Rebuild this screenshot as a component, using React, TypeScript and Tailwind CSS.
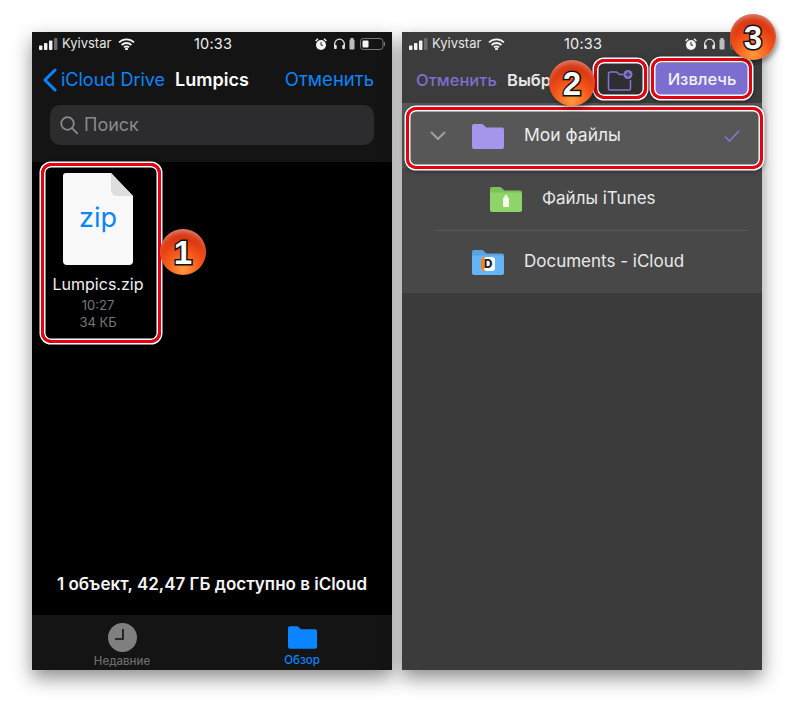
const phoneFont = { fontFamily: 'Inter, "Liberation Sans", sans-serif' };

function StatusBar() {
  return (
    <div className="flex h-[30px] items-center pb-[6px] pl-[7px] pr-[6px] text-[13px] text-[#e6e6e6]">
      <svg width="19" height="12" viewBox="0 0 19 12">
        <rect x="0" y="7.5" width="3.4" height="4.5" rx="0.8" fill="#f2f2f2" />
        <rect x="5" y="5" width="3.4" height="7" rx="0.8" fill="#f2f2f2" />
        <rect x="10" y="2.5" width="3.4" height="9.5" rx="0.8" fill="#f2f2f2" />
        <rect x="15" y="0" width="3.4" height="12" rx="0.8" fill="#6b6b6b" />
      </svg>
      <span className="ml-[4px] w-[50px]">Kyivstar</span>
      <svg className="ml-[6px]" width="17" height="12" viewBox="0 0 17 12" fill="none" stroke="#f2f2f2" strokeWidth="1.8">
        <path d="M1 4.4a10.6 10.6 0 0 1 15 0" />
        <path d="M3.6 7a7 7 0 0 1 9.8 0" />
        <path d="M6 9.4a3.5 3.5 0 0 1 5 0" />
        <circle cx="8.5" cy="11" r="0.6" fill="#f2f2f2" />
      </svg>
      <span className="ml-[59px] text-[14.5px] tracking-[0.2px] text-[#efefef]">10:33</span>
      <div className="ml-auto flex items-center">
        <svg width="12" height="13" viewBox="0 0 12 13">
          <circle cx="6" cy="7" r="5" fill="#f2f2f2" />
          <path d="M6 4v3.2h2" stroke="#333" strokeWidth="1" fill="none" />
          <path d="M0.6 3 3 0.8M11.4 3 9 0.8" stroke="#f2f2f2" strokeWidth="1.5" />
        </svg>
        <svg className="ml-[6px]" width="13" height="12" viewBox="0 0 12 12" fill="none">
          <path d="M1.2 8V6a4.8 4.8 0 0 1 9.6 0v2" stroke="#e8e8e8" strokeWidth="1.3" />
          <rect x="0.6" y="7" width="2.6" height="4" rx="0.8" fill="#e8e8e8" />
          <rect x="8.8" y="7" width="2.6" height="4" rx="0.8" fill="#e8e8e8" />
        </svg>
        <svg className="ml-[3px]" width="6" height="12" viewBox="0 0 6 12">
          <rect x="1.5" y="0" width="3" height="2" fill="#bbb" />
          <rect x="0.5" y="1.5" width="5" height="10" rx="1" fill="#bdbdbd" />
        </svg>
        <svg className="ml-[5px]" width="26" height="12" viewBox="0 0 26 12" fill="none">
          <rect x="0.5" y="0.5" width="22.5" height="11" rx="3" stroke="#777" />
          <rect x="2.5" y="2.5" width="6" height="7" rx="1" fill="#f5f5f5" />
          <path d="M24.4 4v4" stroke="#777" strokeWidth="1.2" />
        </svg>
      </div>
    </div>
  );
}

function Folder({ color, tab, className }: { color: string; tab: string; className?: string }) {
  return (
    <svg className={className} width="32" height="26" viewBox="0 0 32 26">
      <path d="M0 3a2 2 0 0 1 2-2h8.5l4 3.5H30a2 2 0 0 1 2 2V8H0z" fill={tab} />
      <path d="M0 6.5h30a2 2 0 0 1 2 2V24a2 2 0 0 1-2 2H2a2 2 0 0 1-2-2z" fill={color} />
    </svg>
  );
}

function LeftPhone() {
  return (
    <div className="flex h-[638px] w-[360px] flex-col bg-black shadow-[0_8px_18px_rgba(0,0,0,0.45)]" style={phoneFont}>
      <div className="h-[130px] bg-[#141414]">
        <StatusBar />
        <div className="flex h-[35px] items-center pl-[10px] pr-[18px]">
          <svg width="16" height="24" viewBox="0 0 16 24" fill="none" stroke="#0a84ff" strokeWidth="3" strokeLinecap="round" strokeLinejoin="round">
            <path d="M13 2 3 12l10 10" />
          </svg>
          <span className="ml-[3px] text-[18px] text-[#0a84ff]">iCloud Drive</span>
          <span className="ml-[10px] text-[18px] font-semibold text-white">Lumpics</span>
          <span className="ml-auto text-[18.5px] text-[#0a84ff]">Отменить</span>
        </div>
        <div className="ml-[18px] mt-[8px] flex h-[40px] w-[324px] items-center rounded-[10px] bg-[#2c2c2e] pb-[1px] pl-[9px] text-[#8a8a8d]">
          <svg width="20" height="20" viewBox="0 0 20 20" fill="none" stroke="#8a8a8d" strokeWidth="1.8" strokeLinecap="round">
            <circle cx="8.5" cy="8.5" r="6.3" />
            <path d="m13.3 13.3 5 5" />
          </svg>
          <span className="ml-[5px] text-[18px]">Поиск</span>
        </div>
      </div>
      <div className="flex-1">
        <div className="ml-[31px] mt-[11px] flex w-[70px] flex-col">
          <svg width="70" height="92" viewBox="0 0 70 92">
            <path d="M3 0h45l22 23v65a4 4 0 0 1-4 4H4a4 4 0 0 1-4-4V3a3 3 0 0 1 3-3z" fill="#f9f9f9" />
            <path d="M48 0v17a6 6 0 0 0 6 6h16z" fill="#dedede" />
          </svg>
        </div>
        <div className="ml-[11px] -mt-[63px] w-[110px] text-center text-[27px] leading-[32px] text-[#0a84ff]">zip</div>
        <div className="ml-[11px] mt-[41px] w-[110px] text-center text-[16px] leading-[18px] text-[#f0f0f0]">Lumpics.zip</div>
        <div className="ml-[11px] mt-[4px] w-[110px] text-center text-[13px] leading-[17px] text-[#777]">10:27</div>
        <div className="ml-[11px] w-[110px] text-center text-[13px] leading-[17px] text-[#777]">34 КБ</div>
      </div>
      <div className="pb-[21px] text-center text-[17px] font-semibold leading-[20px] text-[#f5f5f5]">1 объект, 42,47 ГБ доступно в iCloud</div>
      <div className="flex h-[55px] bg-[#141414]">
        <div className="flex w-[180px] flex-col items-center pt-[8px]">
          <svg width="29" height="29" viewBox="0 0 29 29">
            <circle cx="14.5" cy="14.5" r="14.5" fill="#7f7f7f" />
            <path d="M15 6v10H7" fill="none" stroke="#111" strokeWidth="1.6" />
          </svg>
          <span className="mt-[2px] text-[11.5px] font-medium leading-[14px] text-[#6c6c6c]">Недавние</span>
        </div>
        <div className="flex w-[180px] flex-col items-center pt-[9px]">
          <Folder color="#0a84ff" tab="#0a84ff" className="h-[26px] w-[29px]" />
          <span className="mt-[3px] text-[11.5px] font-medium leading-[14px] text-[#0a84ff]">Обзор</span>
        </div>
      </div>
    </div>
  );
}

function RightPhone() {
  return (
    <div className="flex h-[638px] w-[360px] flex-col bg-[#3b3b3b] shadow-[0_8px_18px_rgba(0,0,0,0.45)]" style={phoneFont}>
      <div className="h-[71px] bg-[#3c3c3c]">
        <StatusBar />
        <div className="flex h-[36px] items-center pl-[14px]">
          <span className="w-[91px] text-[16.5px] font-medium text-[#7d6fd0]">Отменить</span>
          <span className="w-[46px] overflow-hidden text-[16.5px] font-semibold text-[#e8e8e8]">Выбр</span>
          <div className="ml-[41px] flex h-[36px] w-[52px] items-center justify-center bg-[#2f2f2f]">
            <svg width="27" height="22" viewBox="0 0 26 22" fill="none" stroke="#8375d6" strokeWidth="1.5">
              <path d="M1 20V5a2 2 0 0 1 2-2h6l3 2.5h4" />
              <path d="M1 20a1 1 0 0 0 1 1h20a1 1 0 0 0 1-1V11" />
              <circle cx="20.5" cy="5.5" r="4.5" fill="#8375d6" stroke="none" />
              <path d="M20.5 3v5M18 5.5h5" stroke="#3c3c3c" strokeWidth="1.3" />
            </svg>
          </div>
          <div className="ml-[8px] flex h-[34px] w-[96px] items-center justify-center rounded-[6px] bg-[#7c6ed0] pb-[1px] text-[16.5px] font-medium text-[#f2f2f2]">
            Извлечь
          </div>
        </div>
      </div>
      <div className="flex h-[65px] items-center bg-[#575757]">
        <svg className="ml-[28px]" width="16" height="10" viewBox="0 0 16 10" fill="none" stroke="#a0a0a0" strokeWidth="2" strokeLinecap="round" strokeLinejoin="round">
          <path d="m1.5 1.5 6.5 6.5 6.5-6.5" />
        </svg>
        <Folder color="#a795ec" tab="#a795ec" className="ml-[26px]" />
        <span className="ml-[20px] pb-[1px] text-[17.5px] text-[#ececec]">Мои файлы</span>
        <svg className="ml-auto mr-[22px]" width="16" height="12" viewBox="0 0 16 12" fill="none" stroke="#8375d6" strokeWidth="1.6">
          <path d="m1 6.5 4.5 4.5L15 1" />
        </svg>
      </div>
      <div className="bg-[#484848]">
        <div className="flex h-[62px] items-center pl-[88px]">
          <div className="relative flex h-[26px] w-[32px] items-center justify-center">
            <Folder color="#8fd468" tab="#7cc259" className="absolute inset-0" />
            <svg className="relative mt-[4px]" width="6" height="12" viewBox="0 0 6 12">
              <rect x="1.5" y="0" width="3" height="3" fill="#e8f5e0" />
              <rect x="0" y="2.5" width="6" height="9.5" rx="1" fill="#f4faf0" />
            </svg>
          </div>
          <span className="ml-[20px] text-[17px] text-[#e8e8e8]">Файлы iTunes</span>
        </div>
        <div className="ml-[33px] mr-[14px] h-px bg-[#585858]" />
        <div className="flex h-[62px] items-center pl-[70px]">
          <div className="relative flex h-[26px] w-[32px] items-center justify-center">
            <Folder color="#64b5f6" tab="#5aa3e0" className="absolute inset-0" />
            <span className="relative mt-[3px] flex h-[14px] w-[14px] items-center justify-center rounded-[3px] bg-white text-[12px] font-extrabold leading-none text-[#222] [box-shadow:inset_3px_0_0_#f0802a]">D</span>
          </div>
          <span className="ml-[20px] text-[17px] text-[#e8e8e8]">Documents - iCloud</span>
        </div>
      </div>
    </div>
  );
}

function Frame({ className }: { className: string }) {
  return (
    <div className={`absolute rounded-[10px] border-[3px] border-[#e8000f] shadow-[0_0_0_1.5px_#fff,inset_0_0_0_1.5px_#fff,0_1px_4px_2px_rgba(0,0,0,0.35)] ${className}`} />
  );
}

function Badge({ n, className }: { n: number; className: string }) {
  return (
    <div
      className={`absolute flex h-[46px] w-[46px] items-center justify-center rounded-full bg-[radial-gradient(circle_at_50%_88%,#ff9a3c_0%,#f5561c_38%,#d42c08_75%,#c02406_100%)] text-[33px] font-bold leading-none text-white shadow-[2px_3px_5px_rgba(0,0,0,0.4),inset_0_6px_6px_-3px_rgba(255,255,255,0.45)] [-webkit-text-stroke:3px_#111] [paint-order:stroke_fill] ${className}`}
      style={{ fontFamily: '"Liberation Sans", sans-serif' }}
    >
      {n}
    </div>
  );
}

export default function App() {
  return (
    <div className="relative h-[703px] w-[794px] overflow-hidden bg-white">
      <div className="flex gap-[10px] pl-[32px] pt-[32px]">
        <LeftPhone />
        <RightPhone />
      </div>
      <Frame className="left-[41px] top-[163px] h-[180px] w-[120px]" />
      <Frame className="left-[594px] top-[59px] h-[40px] w-[53px]" />
      <Frame className="left-[651px] top-[58px] h-[41px] w-[101px]" />
      <Frame className="left-[406px] top-[107px] h-[62px] w-[357px]" />
      <Badge n={1} className="left-[160px] top-[229px]" />
      <Badge n={2} className="left-[549px] top-[60px]" />
      <Badge n={3} className="left-[730px] top-[14px]" />
    </div>
  );
}
